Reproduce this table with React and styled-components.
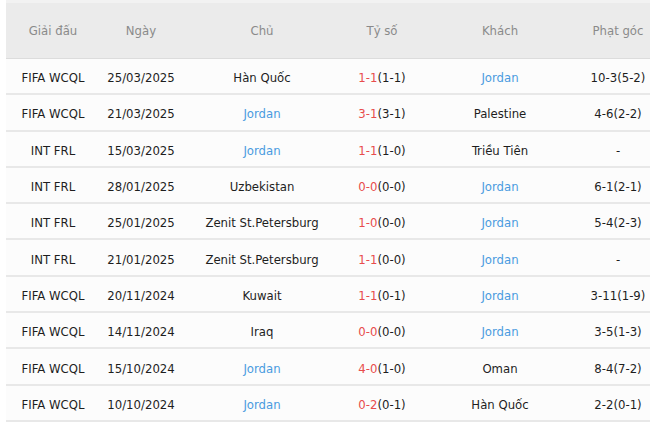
import React from "react";
import styled, { createGlobalStyle } from "styled-components";

const Global = createGlobalStyle`
  html, body { margin: 0; padding: 0; background: #fff; overflow: hidden; }
  body { font-family: "DejaVu Sans Condensed", "DejaVu Sans", Verdana, sans-serif; }
`;

const Wrap = styled.div`
  padding-left: 6px;
  width: 680px;
`;

const Table = styled.div`
  width: 652px;
  display: grid;
  grid-template-columns: 94px 82px 160px 80px 156px 80px;
  font-size: 13px;
  font-stretch: semi-condensed;
`;

const Head = styled.div`
  height: 59px;
  display: flex;
  align-items: center;
  justify-content: center;
  background: #ebebeb;
  border-top: 3px solid #f2f2f2;
  box-sizing: border-box;
  color: #8a8a8a;
  border-bottom: 1px solid #dcdcdc;
`;

const Cell = styled.div`
  height: 36.3px;
  box-sizing: border-box;
  padding-top: 3px;
  display: flex;
  align-items: center;
  justify-content: center;
  background: #fcfcfc;
  border-bottom: 2px solid #e8e8e8;
  color: ${(p) => (p.$blue ? "#4a9be0" : "#1e1e1e")};
  white-space: nowrap;
`;

const Red = styled.span`
  color: #e84c4c;
`;

const rows = [
  ["FIFA WCQL", "25/03/2025", "Hàn Quốc", "1-1", "(1-1)", "Jordan", "10-3(5-2)"],
  ["FIFA WCQL", "21/03/2025", "Jordan", "3-1", "(3-1)", "Palestine", "4-6(2-2)"],
  ["INT FRL", "15/03/2025", "Jordan", "1-1", "(1-0)", "Triều Tiên", "-"],
  ["INT FRL", "28/01/2025", "Uzbekistan", "0-0", "(0-0)", "Jordan", "6-1(2-1)"],
  ["INT FRL", "25/01/2025", "Zenit St.Petersburg", "1-0", "(0-0)", "Jordan", "5-4(2-3)"],
  ["INT FRL", "21/01/2025", "Zenit St.Petersburg", "1-1", "(0-0)", "Jordan", "-"],
  ["FIFA WCQL", "20/11/2024", "Kuwait", "1-1", "(0-1)", "Jordan", "3-11(1-9)"],
  ["FIFA WCQL", "14/11/2024", "Iraq", "0-0", "(0-0)", "Jordan", "3-5(1-3)"],
  ["FIFA WCQL", "15/10/2024", "Jordan", "4-0", "(1-0)", "Oman", "8-4(7-2)"],
  ["FIFA WCQL", "10/10/2024", "Jordan", "0-2", "(0-1)", "Hàn Quốc", "2-2(0-1)"],
];

const heads = ["Giải đấu", "Ngày", "Chủ", "Tỷ số", "Khách", "Phạt góc"];

export default function App() {
  return (
    <Wrap>
      <Global />
      <Table>
        {heads.map((h) => (
          <Head key={h}>{h}</Head>
        ))}
        {rows.map((r, i) => (
          <React.Fragment key={i}>
            <Cell>{r[0]}</Cell>
            <Cell>{r[1]}</Cell>
            <Cell $blue={r[2] === "Jordan"}>{r[2]}</Cell>
            <Cell>
              <Red>{r[3]}</Red>
              {r[4]}
            </Cell>
            <Cell $blue={r[5] === "Jordan"}>{r[5]}</Cell>
            <Cell>{r[6]}</Cell>
          </React.Fragment>
        ))}
      </Table>
    </Wrap>
  );
}
